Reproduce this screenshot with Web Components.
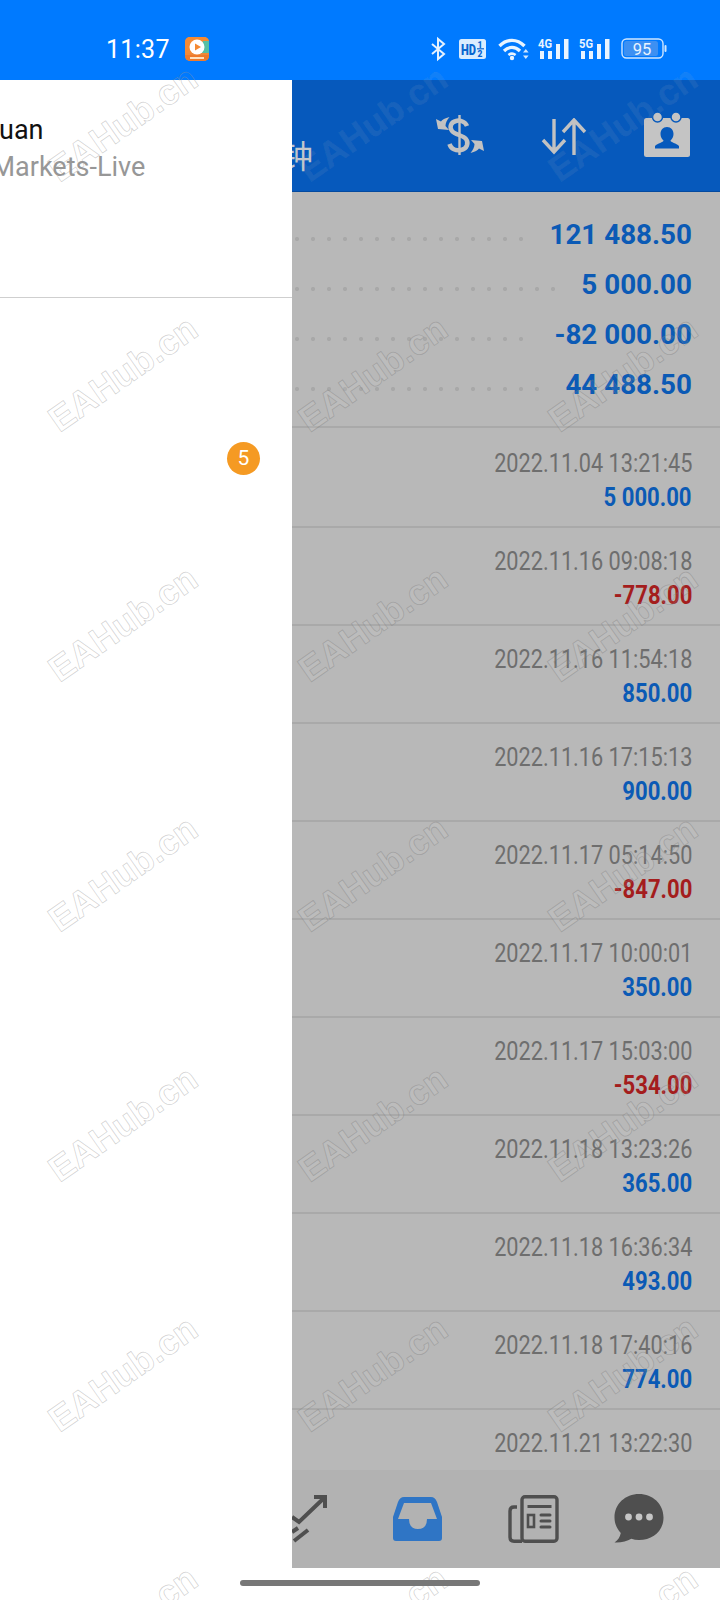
<!DOCTYPE html>
<html>
<head>
<meta charset="utf-8">
<style>
  html, body { margin: 0; padding: 0; }
  body { width: 720px; height: 1600px; overflow: hidden; position: relative; background: #fff; font-family: Roboto, "Noto Sans CJK SC", sans-serif; }
  .page { display: flex; flex-direction: column; height: 1600px; }
</style>
</head>
<body>
<div class="page">
  <status-bar></status-bar>
  <account-pane>
    <summary-row value="121 488.50"></summary-row>
    <summary-row value="5 000.00"></summary-row>
    <summary-row value="-82 000.00"></summary-row>
    <summary-row value="44 488.50"></summary-row>
    <div slot="rows">
      <tx-row date="2022.11.04 13:21:45" amount="5 000.00" style="--top:2px"></tx-row>
      <tx-row date="2022.11.16 09:08:18" amount="-778.00"></tx-row>
      <tx-row date="2022.11.16 11:54:18" amount="850.00"></tx-row>
      <tx-row date="2022.11.16 17:15:13" amount="900.00"></tx-row>
      <tx-row date="2022.11.17 05:14:50" amount="-847.00"></tx-row>
      <tx-row date="2022.11.17 10:00:01" amount="350.00"></tx-row>
      <tx-row date="2022.11.17 15:03:00" amount="-534.00"></tx-row>
      <tx-row date="2022.11.18 13:23:26" amount="365.00"></tx-row>
      <tx-row date="2022.11.18 16:36:34" amount="493.00"></tx-row>
      <tx-row date="2022.11.18 17:40:16" amount="774.00"></tx-row>
      <tx-row date="2022.11.21 13:22:30"></tx-row>
    </div>
  </account-pane>
</div>
<side-drawer></side-drawer>
<water-marks></water-marks>
<home-bar></home-bar>

<script>
class StatusBar extends HTMLElement {
  constructor() {
    super();
    this.attachShadow({ mode: "open" });
    this.shadowRoot.innerHTML = `
      <style>
        :host { display: flex; align-items: center; height: 80px; flex: none; background: #007aff; color: #fff; padding: 17px 0 0 106px; box-sizing: border-box; }
        .time { font-size: 25px; line-height: 30px; width: 79px; letter-spacing: .3px; position: relative; top: 1px; }
        svg { display: block; flex: none; overflow: visible; }
        text { font-family: Roboto, sans-serif; }
      </style>
      <span class="time">11:37</span>
      <svg width="24" height="24" viewBox="0 0 24 24" style="margin-right:222px">
        <rect width="24" height="24" rx="5" fill="#f0883a"/>
        <path d="M0 5a5 5 0 0 1 5-5h14a5 5 0 0 1 5 5v11H0z" fill="#f58a34"/>
        <path d="M24 4v12H14l4-12z" fill="#58bfa4"/>
        <circle cx="12" cy="10" r="7.5" fill="#fff"/>
        <path d="M10 6.5l6 3.5-6 3.5z" fill="#f58a34"/>
        <path d="M0 18h24v1a5 5 0 0 1-5 5H5a5 5 0 0 1-5-5z" fill="#ee7a2c"/>
        <rect x="5" y="20" width="14" height="2" fill="#ffe2c0"/>
      </svg>
      <svg width="15" height="22" viewBox="0 0 15 22" fill="none" stroke="#e6f2ff" stroke-width="2" style="margin-right:13px">
        <path d="M1 6l12 10-6 5V1l6 5L1 16"/>
      </svg>
      <svg width="28" height="20" viewBox="0 0 28 20" style="margin-right:11px">
        <rect width="27" height="20" rx="2.5" fill="#d9ecff"/>
        <text x="2" y="15.5" font-size="15" font-weight="900" fill="#0a66cf" textLength="15" lengthAdjust="spacingAndGlyphs">HD</text>
        <text x="18.500" y="8.500" font-size="8.500" font-weight="900" fill="#0a66cf">1</text>
        <rect x="18" y="9.200" width="7" height="1.200" fill="#0a66cf"/>
        <text x="18.500" y="18" font-size="8.500" font-weight="900" fill="#0a66cf">2</text>
      </svg>
      <svg width="31" height="24" viewBox="0 0 31 24" fill="none" stroke="#e9f4ff" stroke-width="3.400" style="margin-right:9px">
        <path d="M1.500 9C9 1.500 19 1.500 26.500 9"/>
        <path d="M6 14c5-4.600 11-4.600 16 0"/>
        <path d="M10.400 18c2.200-1.600 5-1.600 7.200 0" stroke-width="2.600"/>
        <circle cx="14" cy="21" r="2.200" fill="#e9f4ff" stroke="none"/>
        <path d="M25 15.500l2.800-3.500 2.800 3.500zM25 18.500l2.800 3.500 2.800-3.500z" fill="#cfe6ff" stroke="none"/>
      </svg>
      <svg width="31" height="22" viewBox="0 0 31 22" style="margin-right:10px">
        <text x="0" y="10" font-size="12.500" font-weight="700" fill="#e9f4ff" textLength="14" lengthAdjust="spacingAndGlyphs">4G</text>
        <path d="M2 13h4v8H2zM10 13h4v8h-4zM18 6h4v15h-4zM26 1h4.500v20H26z" fill="#e9f4ff"/>
      </svg>
      <svg width="31" height="22" viewBox="0 0 31 22" style="margin-right:11px">
        <text x="0" y="10" font-size="12.500" font-weight="700" fill="#e9f4ff" textLength="14" lengthAdjust="spacingAndGlyphs">5G</text>
        <path d="M2 13h4v8H2zM10 13h4v8h-4zM18 6h4v15h-4zM26 1h4.500v20H26z" fill="#e9f4ff"/>
      </svg>
      <svg width="46" height="21" viewBox="0 0 46 21">
        <rect x="1" y="1" width="41" height="19" rx="4.500" fill="none" stroke="#cfe6ff" stroke-width="1.400"/>
        <rect x="3" y="3" width="34" height="15" rx="2.500" fill="#3d90f2"/>
        <rect x="43.500" y="7" width="2" height="7" rx="1" fill="#cfe6ff"/>
        <text x="21" y="16.500" font-size="16.500" fill="#e9f4ff" text-anchor="middle">95</text>
      </svg>
    `;
  }
}
customElements.define("status-bar", StatusBar);

class AppBar extends HTMLElement {
  constructor() {
    super();
    this.attachShadow({ mode: "open" });
    this.shadowRoot.innerHTML = `
      <style>
        :host { display: flex; align-items: flex-start; height: 112px; flex: none; background: #0659bc; border-bottom: 1px solid #044a9f; box-sizing: border-box; color: #c2c6cc; }
        .title { font: 32px/36px "Noto Sans CJK SC", sans-serif; margin: 56px 0 0 281px; width: 144px; height: 36px; flex: none; }
        svg { display: block; flex: none; }
      </style>
      <span class="title">钟</span>
      <svg width="70" height="60" viewBox="0 0 70 60" style="margin-top:25px" fill="#c2c2c2">
        <rect x="33.300" y="10" width="2.400" height="40"/>
        <path d="M42 21C40 16 34 15 31 16 26 17 24 22 27 26 30 30 38 30 41 34 44 38 42 44 36 45 31 46 26 44 24.500 39" fill="none" stroke="#c2c2c2" stroke-width="4.500"/>
        <path d="M24.500 12C20 13 17 15 16 16.500L11 14 13 24 24 25 20.500 21C20.500 18 22 15 24.500 12Z"/>
        <path d="M24.500 12C20 13 17 15 16 16.500L11 14 13 24 24 25 20.500 21C20.500 18 22 15 24.500 12Z" transform="rotate(180 35 30)"/>
      </svg>
      <svg width="46" height="38" viewBox="0 0 46 38" style="margin:38px 0 0 46px" fill="none" stroke="#c2c2c2" stroke-width="3.400">
        <path d="M13 1v33M2 22l11 12 11-12"/>
        <path d="M33 37V3M22 14L33 2l11 12"/>
      </svg>
      <svg width="48" height="46" viewBox="0 0 48 46" style="margin:31px 0 0 56px">
        <rect x="1" y="7" width="46" height="39" rx="2.500" fill="#c4c4c4"/>
        <circle cx="14.500" cy="6" r="5" fill="#c4c4c4" stroke="#0659bc" stroke-width="1.500"/>
        <circle cx="33" cy="6" r="5" fill="#c4c4c4" stroke="#0659bc" stroke-width="1.500"/>
        <path d="M24 16c4 0 6.500 3 6.500 7 0 3-1.300 5-3 6.500 0 2 6 2.500 8.500 5.500v2.500H12v-2.500c2.500-3 8.500-3.500 8.500-5.500-1.700-1.500-3-3.500-3-6.500 0-4 2.500-7 6.500-7z" fill="#0659bc"/>
      </svg>
    `;
  }
}
customElements.define("app-bar", AppBar);

class SummaryRow extends HTMLElement {
  constructor() {
    super();
    this.attachShadow({ mode: "open" });
    this.shadowRoot.innerHTML = `
      <style>
        :host { display: flex; height: 50px; align-items: center; padding-left: 292px; padding-right: 28px; }
        .dots { flex: 1; height: 6px; margin: 10px 25px 0 0; background: radial-gradient(circle at center, #a8a8a8 1.8px, transparent 2.4px) -3px 0 / 16px 6px repeat-x; }
        .v { font-weight: 700; font-size: 27.8px; color: #0b5ab5; white-space: pre; }
      </style>
      <div class="dots"></div>
      <span class="v"></span>
    `;
    this.shadowRoot.querySelector(".v").textContent = this.getAttribute("value");
  }
}
customElements.define("summary-row", SummaryRow);

class TxRow extends HTMLElement {
  constructor() {
    super();
    this.attachShadow({ mode: "open" });
    this.shadowRoot.innerHTML = `
      <style>
        :host { display: flex; flex-direction: column; align-items: flex-end; border-top: 2px solid #a9a9a9; height: 96px; padding: var(--top, 0) 28px 0 0; }
        span { display: block; white-space: pre; transform-origin: right center; }
        .d { font-size: 26px; line-height: 34px; margin-top: 16px; color: #6e6e6e; transform: scaleX(.835); }
        .a { font-size: 26px; line-height: 34px; font-weight: 700; transform: scaleX(.85); color: #0b5ab5; }
        .a.neg { color: #a41d1d; }
      </style>
      <span class="d"></span>
      <span class="a"></span>
    `;
    const amount = this.getAttribute("amount") || "";
    this.shadowRoot.querySelector(".d").textContent = this.getAttribute("date");
    const a = this.shadowRoot.querySelector(".a");
    a.textContent = amount;
    if (amount.startsWith("-")) a.classList.add("neg");
  }
}
customElements.define("tx-row", TxRow);

class BottomNav extends HTMLElement {
  constructor() {
    super();
    this.attachShadow({ mode: "open" });
    this.shadowRoot.innerHTML = `
      <style>
        :host { display: flex; align-items: center; height: 98px; flex: none; background: #b2b2b2; padding-bottom: 1px; box-sizing: border-box; }
        svg { display: block; flex: none; }
      </style>
      <svg width="60" height="50" viewBox="0 0 60 50" style="margin-left:270px" fill="none" stroke="#4f4f4f" stroke-width="4">
        <path d="M22 23l7 5 24-23"/>
        <path d="M44 3h11v11" stroke-linejoin="miter"/>
        <path d="M24 47l14-11"/>
        <path d="M22 38l6-4"/>
      </svg>
      <svg width="50" height="44" viewBox="0 0 50 44" style="margin-left:63px">
        <path fill="#2f75c5" fill-rule="evenodd" d="M11 0h27q4 0 6 5l5 15v21q0 3-3 3H3q-3 0-3-3V20L5 5q2-5 6-5zM11 6 5 22h11q0 10 9 10t9-10h10L38 6z"/>
      </svg>
      <svg width="52" height="48" viewBox="0 0 52 48" style="margin-left:65px" fill="none" stroke="#4f4f4f" stroke-width="3.400">
        <rect x="14" y="1.700" width="35" height="44.600" rx="3"/>
        <path d="M14 46.300H6q-4 0-4-4V16q0-4 4-4h3"/>
        <path d="M19.500 11.500h24" stroke-width="3"/>
        <rect x="20" y="20" width="6" height="12" stroke-width="2.600"/>
        <path d="M33 20h9M33 26h9M33 32h9" stroke-width="3" stroke-linecap="round"/>
      </svg>
      <svg width="50" height="49" viewBox="0 0 50 49" style="margin-left:54px">
        <path fill="#4f4f4f" d="M25 0c13.500 0 24.500 9.800 24.500 23.500S38.500 46 25 46c-2.800 0-5.300-.4-7.700-1.200C13 47.500 7 48.800.5 48.500c3-2 5.500-5 6.300-9.500C3 35 .5 29.500.5 23.500.5 9.800 11.500 0 25 0z"/>
        <circle cx="14.500" cy="23" r="3.400" fill="#c6c6c6"/>
        <circle cx="25" cy="23" r="3.400" fill="#c6c6c6"/>
        <circle cx="35.500" cy="23" r="3.400" fill="#c6c6c6"/>
      </svg>
    `;
  }
}
customElements.define("bottom-nav", BottomNav);

class AccountPane extends HTMLElement {
  constructor() {
    super();
    this.attachShadow({ mode: "open" });
    this.shadowRoot.innerHTML = `
      <style>
        :host { display: flex; flex-direction: column; height: 1520px; }
        .body { height: 1278px; flex: none; background: #b8b8b8; overflow: hidden; padding-top: 17px; box-sizing: border-box; }
        .gap { height: 17px; }
        .white { flex: 1; background: #fff; }
      </style>
      <app-bar></app-bar>
      <div class="body">
        <slot></slot>
        <div class="gap"></div>
        <slot name="rows"></slot>
      </div>
      <bottom-nav></bottom-nav>
      <div class="white"></div>
    `;
  }
}
customElements.define("account-pane", AccountPane);

class SideDrawer extends HTMLElement {
  constructor() {
    super();
    this.attachShadow({ mode: "open" });
    this.shadowRoot.innerHTML = `
      <style>
        :host { position: absolute; left: 0; top: 80px; width: 292px; height: 1520px; background: #fff; overflow: hidden; display: block; }
        .head { height: 217px; border-bottom: 1px solid #cfcfcf; }
        .name { font-size: 27px; line-height: 32px; color: #111; padding-top: 34px; margin-left: -1px; }
        .srv { font-size: 27px; line-height: 32px; color: #979797; margin: 5px 0 0 -8.5px; white-space: nowrap; }
        .row { display: flex; justify-content: flex-end; padding: 144px 32px 0 0; }
        .badge { width: 33px; height: 33px; border-radius: 50%; background: #f59a23; color: #fff; font-size: 21px; line-height: 33px; text-align: center; }
      </style>
      <div class="head">
        <div class="name">uan</div>
        <div class="srv">Markets-Live</div>
      </div>
      <div class="row"><span class="badge">5</span></div>
    `;
  }
}
customElements.define("side-drawer", SideDrawer);

class WaterMarks extends HTMLElement {
  constructor() {
    super();
    this.attachShadow({ mode: "open" });
    let html = `
      <style>
        :host { position: absolute; inset: 0; display: block; overflow: hidden; pointer-events: none; }
        span { position: absolute; font: 700 36px "Liberation Sans", Arial, sans-serif; width: 200px; margin: -22px 0 0 -100px; text-align: center; line-height: 44px; transform: rotate(-35deg); color: rgba(255,255,255,.06); -webkit-text-stroke: .8px rgba(125,125,125,.4); white-space: nowrap; }
        span.light { -webkit-text-stroke: .7px rgba(150,150,150,.45); color: transparent; }
        span.bar { color: rgba(190,190,190,.09); -webkit-text-stroke: .6px rgba(190,190,190,.08); }
      </style>`;
    for (let r = 0; r < 7; r++) {
      for (let c = 0; c < 3; c++) {
        const x = 123 + c * 250;
        const y = 124 + r * 250;
        const cls = c === 0 || r === 6 ? "light" : r === 0 ? "bar" : "";
        html += `<span class="${cls}" style="left:${x}px;top:${y}px">EAHub.cn</span>`;
      }
    }
    this.shadowRoot.innerHTML = html;
  }
}
customElements.define("water-marks", WaterMarks);

class HomeBar extends HTMLElement {
  constructor() {
    super();
    this.attachShadow({ mode: "open" });
    this.shadowRoot.innerHTML = `
      <style>
        :host { position: absolute; left: 240px; top: 1580px; width: 240px; height: 6px; border-radius: 3px; background: #777; display: block; }
      </style>
    `;
  }
}
customElements.define("home-bar", HomeBar);
</script>
</body>
</html>
